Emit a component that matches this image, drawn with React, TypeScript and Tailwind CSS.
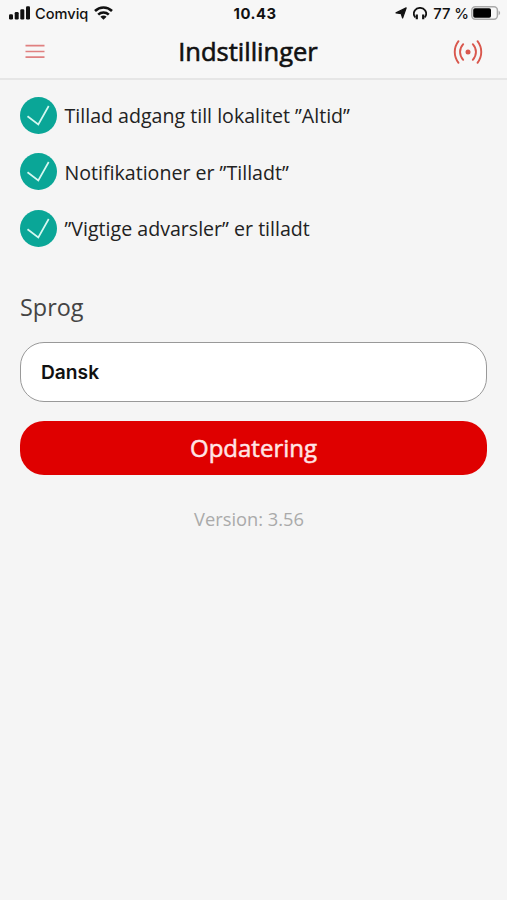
import { useState } from 'react';

const permissions = [
  'Tillad adgang till lokalitet ”Altid”',
  'Notifikationer er ”Tilladt”',
  '”Vigtige advarsler” er tilladt',
];

function StatusBar() {
  return (
    <div className="grid h-[27px] grid-cols-3 items-center pl-[9px] pr-[6px] font-['Inter',sans-serif] text-[14px] leading-none text-[#111]">
      <div className="flex items-center">
        {/* Signal strength */}
        <svg className="-mt-px" width="21" height="14" viewBox="0 0 21 14" fill="currentColor">
          <rect x="0" y="8.3" width="4" height="5.2" rx="1.2" />
          <rect x="5.7" y="6" width="4" height="7.5" rx="1.2" />
          <rect x="11.3" y="3.2" width="4" height="10.3" rx="1.2" />
          <rect x="17" y="0.2" width="4" height="13.3" rx="1.2" />
        </svg>
        <span className="ml-[5px] pt-[2px] text-[14.6px] font-medium">Comviq</span>
        <svg className="-mt-px ml-[6px]" width="19" height="14" viewBox="0 0 19 14" fill="none" stroke="currentColor" strokeWidth="2.6">
          <path d="M1 5C5.8.4 13.2.4 18 5" />
          <path d="M4.2 8.6c3-2.8 7.6-2.8 10.6 0" />
          <path d="M9.5 13.8 6.4 10.7c1.7-1.5 4.5-1.5 6.2 0z" fill="currentColor" stroke="none" />
        </svg>
      </div>
      <div className="pt-[2px] text-center text-[14.8px] font-bold tracking-[0.5px]">10.43</div>
      <div className="flex items-center justify-end">
        <svg width="12" height="12" viewBox="0 0 12 12" fill="currentColor" stroke="currentColor" strokeWidth="1.2" strokeLinejoin="round">
          <path d="M11.2.9 7.6 11 6.2 6.6 1 5.8z" />
        </svg>
        {/* Headphones */}
        <svg className="ml-[6px]" width="14" height="13" viewBox="0 0 14 13" fill="none" stroke="currentColor" strokeWidth="1.8">
          <path d="M2.4 10.5C.6 8.5.5 5.4 2 3.2 4.4.1 9.6.1 12 3.2c1.5 2.2 1.4 5.3-.4 7.3" />
          <path d="M3.8 7.4v4.8M10.2 7.4v4.8" strokeWidth="2.2" />
        </svg>
        <span className="ml-[6px] pt-[2px] text-[14.8px] font-medium">77 %</span>
        <svg className="-mt-px ml-[2px]" width="30" height="14" viewBox="0 0 30 14">
          <rect x="0.8" y="0.8" width="25.6" height="12.4" rx="3.4" fill="none" stroke="#aaa" strokeWidth="1.5" />
          <rect x="2.2" y="2.2" width="17.8" height="9.6" rx="1.8" fill="#000" />
          <path d="M27.6 4.8c2 .7 2 3.7 0 4.400z" fill="#aaa" />
        </svg>
      </div>
    </div>
  );
}

function Header() {
  return (
    <header className="border-b-2 border-[#e6e6e6] bg-[#f7f7f7]">
      <StatusBar />
      <div className="grid h-[51px] grid-cols-[60px_1fr_60px] items-center pb-[2px]">
        <button aria-label="Menu" className="pl-[25px]">
          <svg width="20" height="16" viewBox="0 0 20 16" stroke="#e08080" strokeWidth="1.7">
            <path d="M.5 1.7h19M.5 7.5h19M.5 13.2h19" />
          </svg>
        </button>
        <h1 className="pr-[11px] pt-px text-center text-[25.5px] leading-none text-[#111] [-webkit-text-stroke:0.6px]">Indstillinger</h1>
        <button aria-label="Alarm" className="pl-[6px]">
          <svg width="30" height="26" viewBox="0 0 30 26" fill="none" stroke="#d9574d" strokeWidth="1.9" strokeLinecap="round">
            <circle cx="15" cy="13" r="2.5" fill="#d9574d" stroke="none" />
            <path d="M10.2 5.2c-4.2 4.6-4.2 11 0 15.6M19.8 5.2c4.2 4.6 4.2 11 0 15.6" />
            <path d="M5.5 2.2c-5 6.5-5 15.1 0 21.6M24.5 2.2c5 6.5 5 15.1 0 21.6" />
          </svg>
        </button>
      </div>
    </header>
  );
}

export default function App() {
  const [language] = useState('Dansk');

  return (
    <div className="min-h-screen bg-[#f5f5f5] font-['Open_Sans',sans-serif] text-[#222]">
      <Header />

      <main className="px-5 pt-[17px]">
        <ul className="flex flex-col gap-[19.3px]">
          {permissions.map((text) => (
            <li key={text} className="flex items-center">
              <svg width="37" height="37" viewBox="0 0 37 37" fill="none">
                <circle cx="18.5" cy="18.5" r="18.5" fill="#0aa697" />
                <path d="M7.5 19.3 18.3 27.5 28.7 9" stroke="#d5f8f1" strokeWidth="1.7" />
              </svg>
              <span className="ml-[7.5px] pt-px text-[19.6px] leading-none">{text}</span>
            </li>
          ))}
        </ul>

        <h2 className="mt-[42px] text-[23.4px] leading-[36px] text-[#444]">Sprog</h2>
        <button className="mt-[17px] flex h-[60px] w-full items-center rounded-[24px] border border-[#999] bg-white px-5 pt-[2px] font-['Inter',sans-serif] text-[19.2px] font-semibold text-[#111]">
          {language}
        </button>
        <button className="mt-[19px] h-[54px] w-full rounded-[24px] bg-[#df0000] text-[24px] text-[#ffe5e5] [-webkit-text-stroke:0.5px]">
          Opdatering
        </button>
        <p className="mt-[30px] pr-[9px] text-center text-[18.3px] text-[#aaa]">Version: 3.56</p>
      </main>
    </div>
  );
}
